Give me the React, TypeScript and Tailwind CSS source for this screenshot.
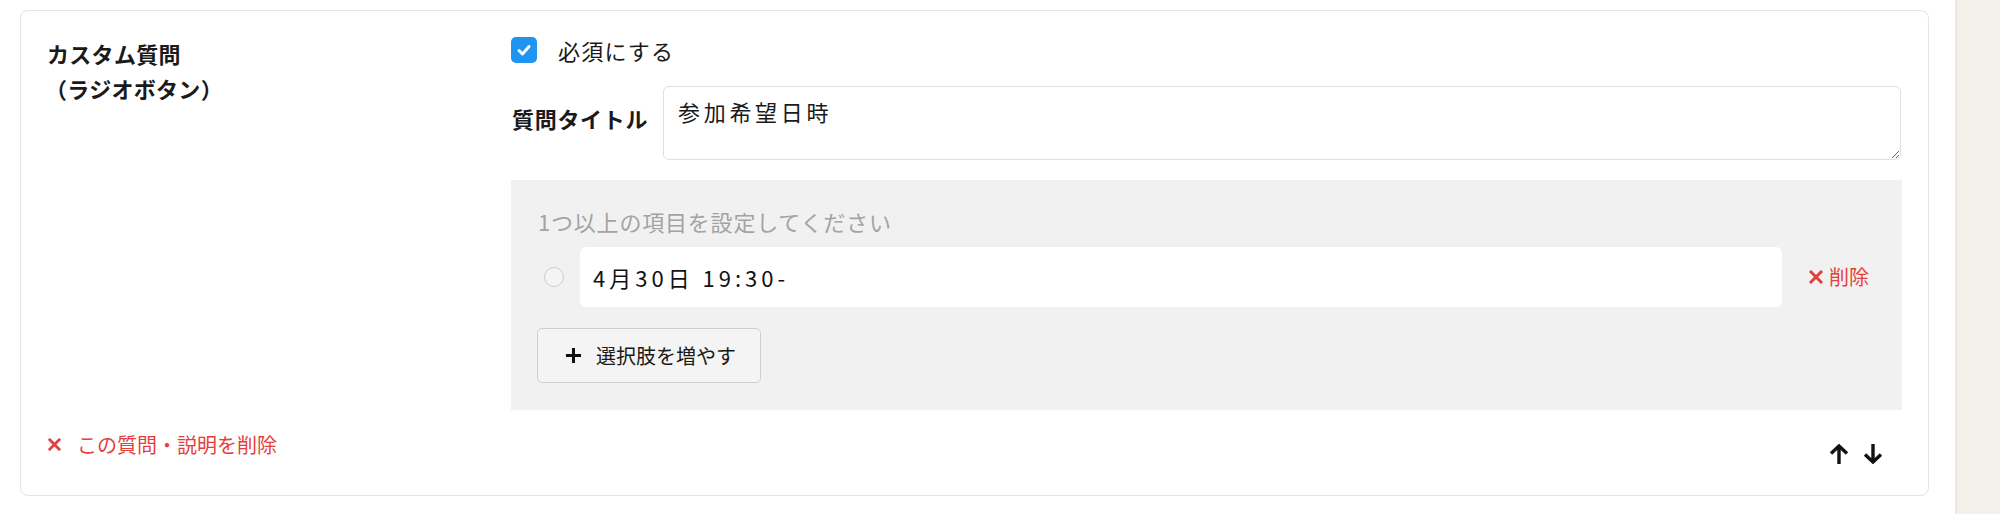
import React from "react";

const font = { fontFamily: '"Noto Sans CJK JP", "Noto Sans", sans-serif' };

function XIcon({ className }: { className?: string }) {
  return (
    <svg viewBox="0 0 14 14" className={className} fill="none">
      <path d="M2 2 L12 12 M12 2 L2 12" stroke="currentColor" strokeWidth="3" strokeLinecap="square" />
    </svg>
  );
}

export default function App() {
  return (
    <div className="w-[2000px] h-[514px] flex bg-white text-[#1a1a1a] overflow-hidden" style={font}>
      <div className="flex-1 pl-[20px] pt-[10px] pr-[26px]">
        <div className="border border-[#e4e4e9] rounded-lg bg-white pt-[26px] px-[26px] pb-[19px]">
          <div className="flex">
            <div className="w-[464px] shrink-0 text-[22px] font-bold leading-[35px] -mt-[1px] tracking-[0.3px]">
              <div>カスタム質問</div>
              <div className="-ml-[2px]">（ラジオボタン）</div>
            </div>
            <div className="flex-1 flex flex-col">
              <div className="flex items-center h-[26px] gap-[21px]">
                <div className="w-[26px] h-[26px] rounded-[5px] bg-[#1f95f2] flex items-center justify-center">
                  <svg viewBox="0 0 16 16" className="w-[16px] h-[16px]" fill="none">
                    <path d="M3 8.5 L6.5 12 L13 4.5" stroke="white" strokeWidth="3" strokeLinecap="round" strokeLinejoin="round" />
                  </svg>
                </div>
                <span className="text-[22px] leading-[33px] tracking-[1.2px]">必須にする</span>
              </div>
              <div className="flex items-start mt-[23px]">
                <div className="w-[152px] shrink-0 pl-[1px] mt-[16px] text-[22px] font-bold leading-[33px] tracking-[0.7px]">質問タイトル</div>
                <textarea
                  className="flex-1 mr-[1px] h-[74px] border border-[#dcdfe5] rounded-md px-[14px] pt-[8px] text-[22px] leading-[33px] tracking-[3.7px] outline-none resize-y text-[#1a1a1a]"
                  style={font}
                  defaultValue="参加希望日時"
                />
              </div>
              <div className="mt-[20px] bg-[#f1f1f1] px-[27px] pt-[25px] pb-[27px]">
                <div className="text-[22px] leading-[33px] text-[#a3a3a3] tracking-[0.8px]">1つ以上の項目を設定してください</div>
                <div className="flex items-center mt-[9px] h-[60px] pr-[6px]">
                  <div className="ml-[6px] w-[20px] h-[20px] rounded-full border-[1.5px] border-[#cdcdcd] bg-[#f4f4f4]" />
                  <div className="ml-[16px] flex-1 h-[60px] bg-white rounded-md flex items-center pl-[13px] text-[22px] tracking-[4px] text-[#111]">
                    4月30日 19:30-
                  </div>
                  <div className="ml-[27px] flex items-center gap-[6px] text-[#e53e3e] text-[20px] leading-[30px]">
                    <XIcon className="w-[14px] h-[14px]" />
                    <span>削除</span>
                  </div>
                </div>
                <div className="mt-[21px] -ml-[1px] w-[224px] h-[55px] border border-[#cfcfcf] rounded-[5px] bg-[#f4f4f4] flex items-center pl-[27px] gap-[14px] text-[20px] text-[#1a1a1a]">
                  <svg viewBox="0 0 18 18" className="w-[17px] h-[17px]" fill="none">
                    <path d="M9 1 V17 M1 9 H17" stroke="#111" strokeWidth="3.2" />
                  </svg>
                  <span>選択肢を増やす</span>
                </div>
              </div>
            </div>
          </div>
          <div className="mt-[18px] h-[48px] flex justify-between items-start">
            <div className="flex items-center gap-[16px] text-[#e53e3e] text-[20px] leading-[33px] pl-[1px]">
              <XIcon className="w-[13px] h-[13px]" />
              <span>この質問・説明を削除</span>
            </div>
            <div className="flex items-center gap-[14px] mt-[16px] mr-[19px]">
              <svg viewBox="0 0 20 20" className="w-[20px] h-[20px]" fill="none">
                <path d="M2 9.5 L10 2 L18 9.5 M10 2.5 V20" stroke="#111" strokeWidth="3.4" />
              </svg>
              <svg viewBox="0 0 20 20" className="w-[20px] h-[20px]" fill="none">
                <path d="M2 10.5 L10 18 L18 10.5 M10 17.5 V0" stroke="#111" strokeWidth="3.4" />
              </svg>
            </div>
          </div>
        </div>
      </div>
      <div className="w-[45px] h-full bg-[#f3f0e9] border-l-2 border-[#ebe7de]" />
    </div>
  );
}
